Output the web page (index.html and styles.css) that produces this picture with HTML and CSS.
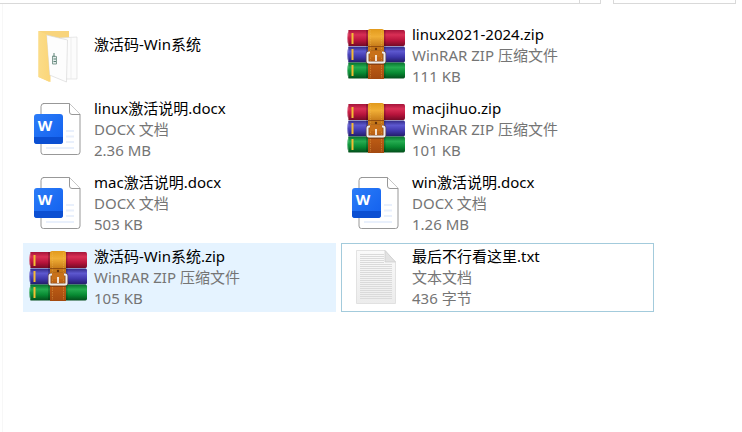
FILE: index.html
```html
<!DOCTYPE html>
<html lang="zh-CN">
<head>
  <meta charset="UTF-8">
  <meta name="viewport" content="width=device-width, initial-scale=1.0">
  <title>文件</title>
  <link rel="stylesheet" href="styles.css">
</head>
<body>
  <!-- icon shapes shared by the tiles -->
  <svg class="sprite" aria-hidden="true">
    <defs>
      <linearGradient id="red" x2="0" y2="1"><stop offset="0" stop-color="#a5153a"/><stop offset=".3" stop-color="#d92f55"/><stop offset=".65" stop-color="#b8143c"/><stop offset="1" stop-color="#750a26"/></linearGradient>
      <linearGradient id="blue" x2="0" y2="1"><stop offset="0" stop-color="#312a86"/><stop offset=".3" stop-color="#5d58cf"/><stop offset=".65" stop-color="#3e37ab"/><stop offset="1" stop-color="#221b66"/></linearGradient>
      <linearGradient id="green" x2="0" y2="1"><stop offset="0" stop-color="#07722e"/><stop offset=".3" stop-color="#25ac50"/><stop offset=".65" stop-color="#078a32"/><stop offset="1" stop-color="#034d1b"/></linearGradient>
      <linearGradient id="strap" x2="0" y2="1"><stop offset="0" stop-color="#e29a1c"/><stop offset=".15" stop-color="#f0ae35"/><stop offset=".35" stop-color="#c67a19"/><stop offset=".7" stop-color="#bd5c14"/><stop offset="1" stop-color="#a34a10"/></linearGradient>
      <linearGradient id="cover" x2="1" y2="0"><stop offset="0" stop-color="#fbdc88"/><stop offset="1" stop-color="#fbd67a"/></linearGradient>
      <linearGradient id="sheet" x2="0" y2="1"><stop offset="0" stop-color="#fafafa"/><stop offset="1" stop-color="#ececec"/></linearGradient>
      <linearGradient id="badge" x2="1" y2="1"><stop offset="0" stop-color="#2b7cf8"/><stop offset="1" stop-color="#1260ee"/></linearGradient>
      <pattern id="rules" width="4" height="2" patternUnits="userSpaceOnUse"><path d="M0 .5h4" stroke="#dadada"/></pattern>
    </defs>

    <symbol id="icon-folder" viewBox="0 0 64 64">
      <path d="M12.500 7H43v9H20z" fill="#f8d47c"/>
      <path d="M34 14l17-1v42H38z" fill="#fcfcfc" stroke="#dedede" stroke-width=".7"/>
      <path d="M45 14v41" stroke="#e8e8e8" stroke-width=".7"/>
      <path d="M12.500 7l12 5v46l-12-5z" fill="url(#cover)"/>
      <path d="M20.500 11l21 5-1 42L23.500 51z" fill="#fdfdfd" stroke="#d8d8d8" stroke-width=".7"/>
      <path d="M12.500 7l8 4.500 3 40V58l-11-5z" fill="url(#cover)"/>
      <path d="M26.500 32l4 .5v7.500h-4z" fill="#e4edeb" stroke="#759389" stroke-width=".9"/>
      <path d="M28 29v4M27.500 35h2.500M27.500 37.500h2.500" stroke="#4b7568" stroke-width=".9"/>
    </symbol>

    <symbol id="icon-zip" viewBox="0 0 64 64">
      <path d="M4.500 6h55q1.500 0 1.500 2v12q0 2-1.500 2h-55q-2.500-8 0-16z" fill="url(#red)"/>
      <path d="M4.500 22.500h55q1.500 0 1.500 2v12q0 2-1.500 2h-55q-2.500-8 0-16z" fill="url(#blue)"/>
      <path d="M4.500 38.500h55q1.500 0 1.500 2v12q0 2-1.500 2h-55q-2.500-8 0-16z" fill="url(#green)"/>
      <path d="M4.500 7q-2 7 0 14M4.500 24q-2 7 0 13M4.500 40q-2 7 0 13" fill="none" stroke="#fff" stroke-opacity=".25"/>
      <path d="M8.500 9v11M8.500 25v11M8.500 41v11" stroke="#f4bc34" stroke-width="2"/>
      <path d="M23 6v48M40.500 6v48" stroke="#000" stroke-opacity=".2" stroke-width="2"/>
      <path d="M24 7q0-2 2-2h12q2 0 2 2v48H24z" fill="url(#strap)"/>
      <path d="M26.500 6v48M37.500 6v48" stroke="#f2bd5c" stroke-opacity=".45" stroke-width=".8" stroke-dasharray="1.500 1"/>
      <path d="M24 22.500h16M24 40.500h16" stroke="#733008" stroke-opacity=".6"/>
      <circle cx="32" cy="25" r="1.200" fill="#62300c"/>
      <rect x="23.500" y="28.500" width="17" height="10" rx="1.500" fill="none" stroke="#6e4123" stroke-opacity=".6" stroke-width="3.500"/>
      <rect x="23.500" y="28.500" width="17" height="10" rx="1.500" fill="none" stroke="#ededed" stroke-width="2"/>
      <path d="M26 27h12v6H26z" fill="#c8711a"/>
      <path d="M32 31v6" stroke="#fff" stroke-width="1.600"/>
    </symbol>

    <symbol id="icon-docx" viewBox="0 0 64 64">
      <path d="M17.500 5.500H43.500L54 16.500V54q0 2.500-2.500 2.500H17.500q-2.500 0-2.500-2.500V8.500q0-3 3-3z" fill="#fff" stroke="#8c8c8c" stroke-width=".9"/>
      <path d="M43.500 5.500V14q0 2.500 2.500 2.500h8" fill="#fff" stroke="#8c8c8c" stroke-width=".9"/>
      <path d="M40 33h8M40 38.500h8M40 44h8M20 50h28" stroke="#e9f0fc" stroke-width="2"/>
      <rect x="8" y="16" width="29" height="30" rx="3" fill="url(#badge)"/>
      <path d="M8 39h29v4q0 3-3 3H11q-3 0-3-3z" fill="#0b4fd2"/>
    </symbol>

    <symbol id="icon-txt" viewBox="0 0 64 64">
      <path d="M12.500 4.500H41L51.500 16V57.500H12.500z" fill="url(#sheet)" stroke="#dcdcdc" stroke-width=".8"/>
      <path d="M16 8h24v10H16zM16 18h32v36H16z" fill="url(#rules)"/>
      <path d="M41 4.500V16h10.500z" fill="#e2e2e2" stroke="#cbcbcb" stroke-width=".7"/>
    </symbol>
  </svg>

  <header class="toolbar">
    <div class="address"></div>
    <div class="search"></div>
  </header>

  <main class="pane">
    <ul class="tiles">
      <li class="tile">
        <svg class="icon"><use href="#icon-folder"/></svg>
        <div class="info">
          <p class="name">激活码-Win系统</p>
        </div>
      </li>
      <li class="tile">
        <svg class="icon"><use href="#icon-zip"/></svg>
        <div class="info">
          <p class="name">linux2021-2024.zip</p>
          <p>WinRAR ZIP 压缩文件</p>
          <p>111 KB</p>
        </div>
      </li>
      <li class="tile">
        <svg class="icon"><use href="#icon-docx"/><text class="icon-letter" x="19" y="33" text-anchor="middle">W</text></svg>
        <div class="info">
          <p class="name">linux激活说明.docx</p>
          <p>DOCX 文档</p>
          <p>2.36 MB</p>
        </div>
      </li>
      <li class="tile">
        <svg class="icon"><use href="#icon-zip"/></svg>
        <div class="info">
          <p class="name">macjihuo.zip</p>
          <p>WinRAR ZIP 压缩文件</p>
          <p>101 KB</p>
        </div>
      </li>
      <li class="tile">
        <svg class="icon"><use href="#icon-docx"/><text class="icon-letter" x="19" y="33" text-anchor="middle">W</text></svg>
        <div class="info">
          <p class="name">mac激活说明.docx</p>
          <p>DOCX 文档</p>
          <p>503 KB</p>
        </div>
      </li>
      <li class="tile">
        <svg class="icon"><use href="#icon-docx"/><text class="icon-letter" x="19" y="33" text-anchor="middle">W</text></svg>
        <div class="info">
          <p class="name">win激活说明.docx</p>
          <p>DOCX 文档</p>
          <p>1.26 MB</p>
        </div>
      </li>
      <li class="tile hovered">
        <svg class="icon"><use href="#icon-zip"/></svg>
        <div class="info">
          <p class="name">激活码-Win系统.zip</p>
          <p>WinRAR ZIP 压缩文件</p>
          <p>105 KB</p>
        </div>
      </li>
      <li class="tile focused">
        <svg class="icon"><use href="#icon-txt"/></svg>
        <div class="info">
          <p class="name">最后不行看这里.txt</p>
          <p>文本文档</p>
          <p>436 字节</p>
        </div>
      </li>
    </ul>
  </main>
</body>
</html>
```
FILE: styles.css
```css
* {
  box-sizing: border-box;
}

body {
  display: flex;
  flex-direction: column;
  min-height: 100vh;
  margin: 0;
  background: #fff;
  color: #757575;
  font-family: "Noto Sans", "Noto Sans CJK SC", sans-serif;
  font-size: 15px;
  line-height: 21px;
}

.sprite {
  position: absolute;
  width: 0;
  height: 0;
}

/* lower edge of the address bar and search box */
.toolbar {
  display: flex;
  gap: 12px;
  height: 4px;
  padding-right: 6px;
}

.address,
.search {
  border: 1px solid #d9d9d9;
  border-top: 0;
}

.address {
  flex: 1;
  border-left: 0;
}

.address::after {
  content: "";
  display: block;
  width: 1px;
  height: 3px;
  margin-left: auto;
  margin-right: 20px;
  background: #d9d9d9;
}

.search {
  width: 123px;
}

.pane {
  flex: 1;
  margin-left: 2px;
  padding: 17px 20px;
  border-left: 1px solid #f7f7f7;
}

.tiles {
  display: grid;
  grid-template-columns: repeat(auto-fill, 313px);
  gap: 5px;
  margin: 0;
  padding: 0;
  list-style: none;
}

.tile {
  display: flex;
  align-items: center;
  gap: 4px;
  height: 69px;
  padding: 0 2px;
  border: 1px solid transparent;
}

.tile.hovered {
  background: #e5f3ff;
  border-color: #e5f3ff;
}

.tile.focused {
  border-color: #a3cbdc;
}

.icon {
  flex: none;
  width: 64px;
  height: 64px;
}

.icon-letter {
  fill: #fff;
  font: bold 15px "Open Sans", sans-serif;
}

.info {
  min-height: 44px;
}

.info p {
  margin: 0;
}

.info .name {
  color: #000;
}
```
